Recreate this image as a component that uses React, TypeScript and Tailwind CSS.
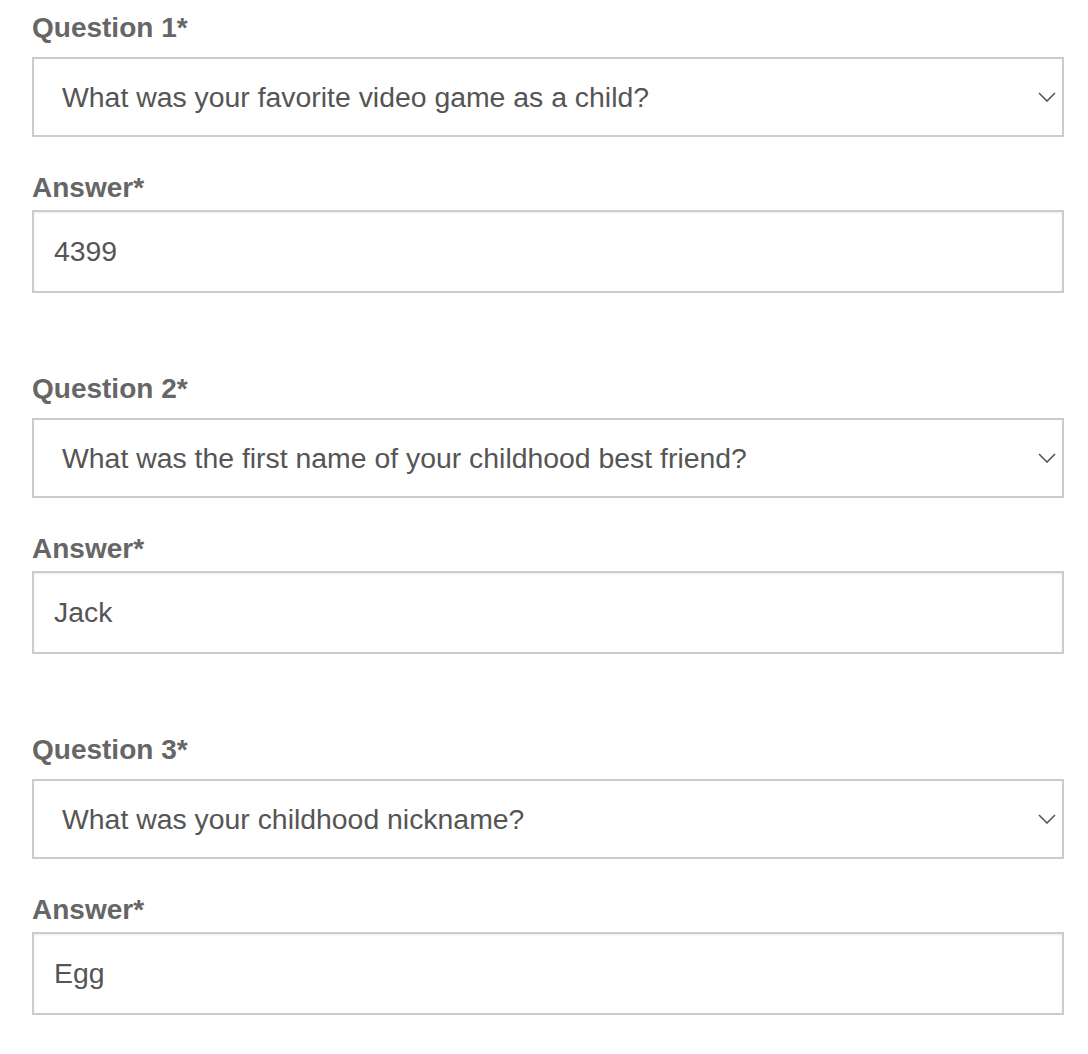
import { useState } from 'react';

interface SecurityQuestion {
  id: number;
  question: string;
  answer: string;
}

const QUESTIONS: SecurityQuestion[] = [
  { id: 1, question: 'What was your favorite video game as a child?', answer: '4399' },
  { id: 2, question: 'What was the first name of your childhood best friend?', answer: 'Jack' },
  { id: 3, question: 'What was your childhood nickname?', answer: 'Egg' },
];

const labelClass =
  "block font-['Liberation_Sans',Arial,sans-serif] text-[28px] leading-[32px] font-bold text-[#666]";

const Chevron = () => (
  <svg
    width="18"
    height="10"
    viewBox="0 0 18 10"
    fill="none"
    className="pointer-events-none absolute right-[8px] top-1/2 -translate-y-1/2"
  >
    <polyline points="1,1 9,9 17,1" stroke="#555" strokeWidth="1.6" />
  </svg>
);

const QuestionBlock = ({ item, first }: { item: SecurityQuestion; first: boolean }) => {
  const [answer, setAnswer] = useState(item.answer);

  return (
    <div className={first ? 'pt-[12px]' : 'pt-[80px]'}>
      <label className={`${labelClass} mb-[13px]`}>Question {item.id}*</label>
      <div className="relative">
        <select
          defaultValue={item.question}
          className="h-[80px] w-full appearance-none rounded-none border-2 border-[#ccc] bg-white pl-[28px] pr-12 font-['Liberation_Sans',Arial,sans-serif] text-[28.4px] text-[#555] outline-none"
        >
          <option>{item.question}</option>
        </select>
        <Chevron />
      </div>

      <label className={`${labelClass} mt-[35px] mb-[6px]`}>Answer*</label>
      <input
        value={answer}
        onChange={(e) => setAnswer(e.target.value)}
        className="block h-[83px] w-full rounded-none border-2 border-[#ccc] bg-white px-[20px] font-['Liberation_Sans',Arial,sans-serif] text-[28.4px] text-[#555] shadow-[inset_0_1px_2px_rgba(0,0,0,0.08)] outline-none"
      />
    </div>
  );
};

export default function App() {
  return (
    <div className="min-h-[1054px] bg-white pl-8 pr-6">
      {QUESTIONS.map((q, i) => (
        <QuestionBlock key={q.id} item={q} first={i === 0} />
      ))}
    </div>
  );
}
